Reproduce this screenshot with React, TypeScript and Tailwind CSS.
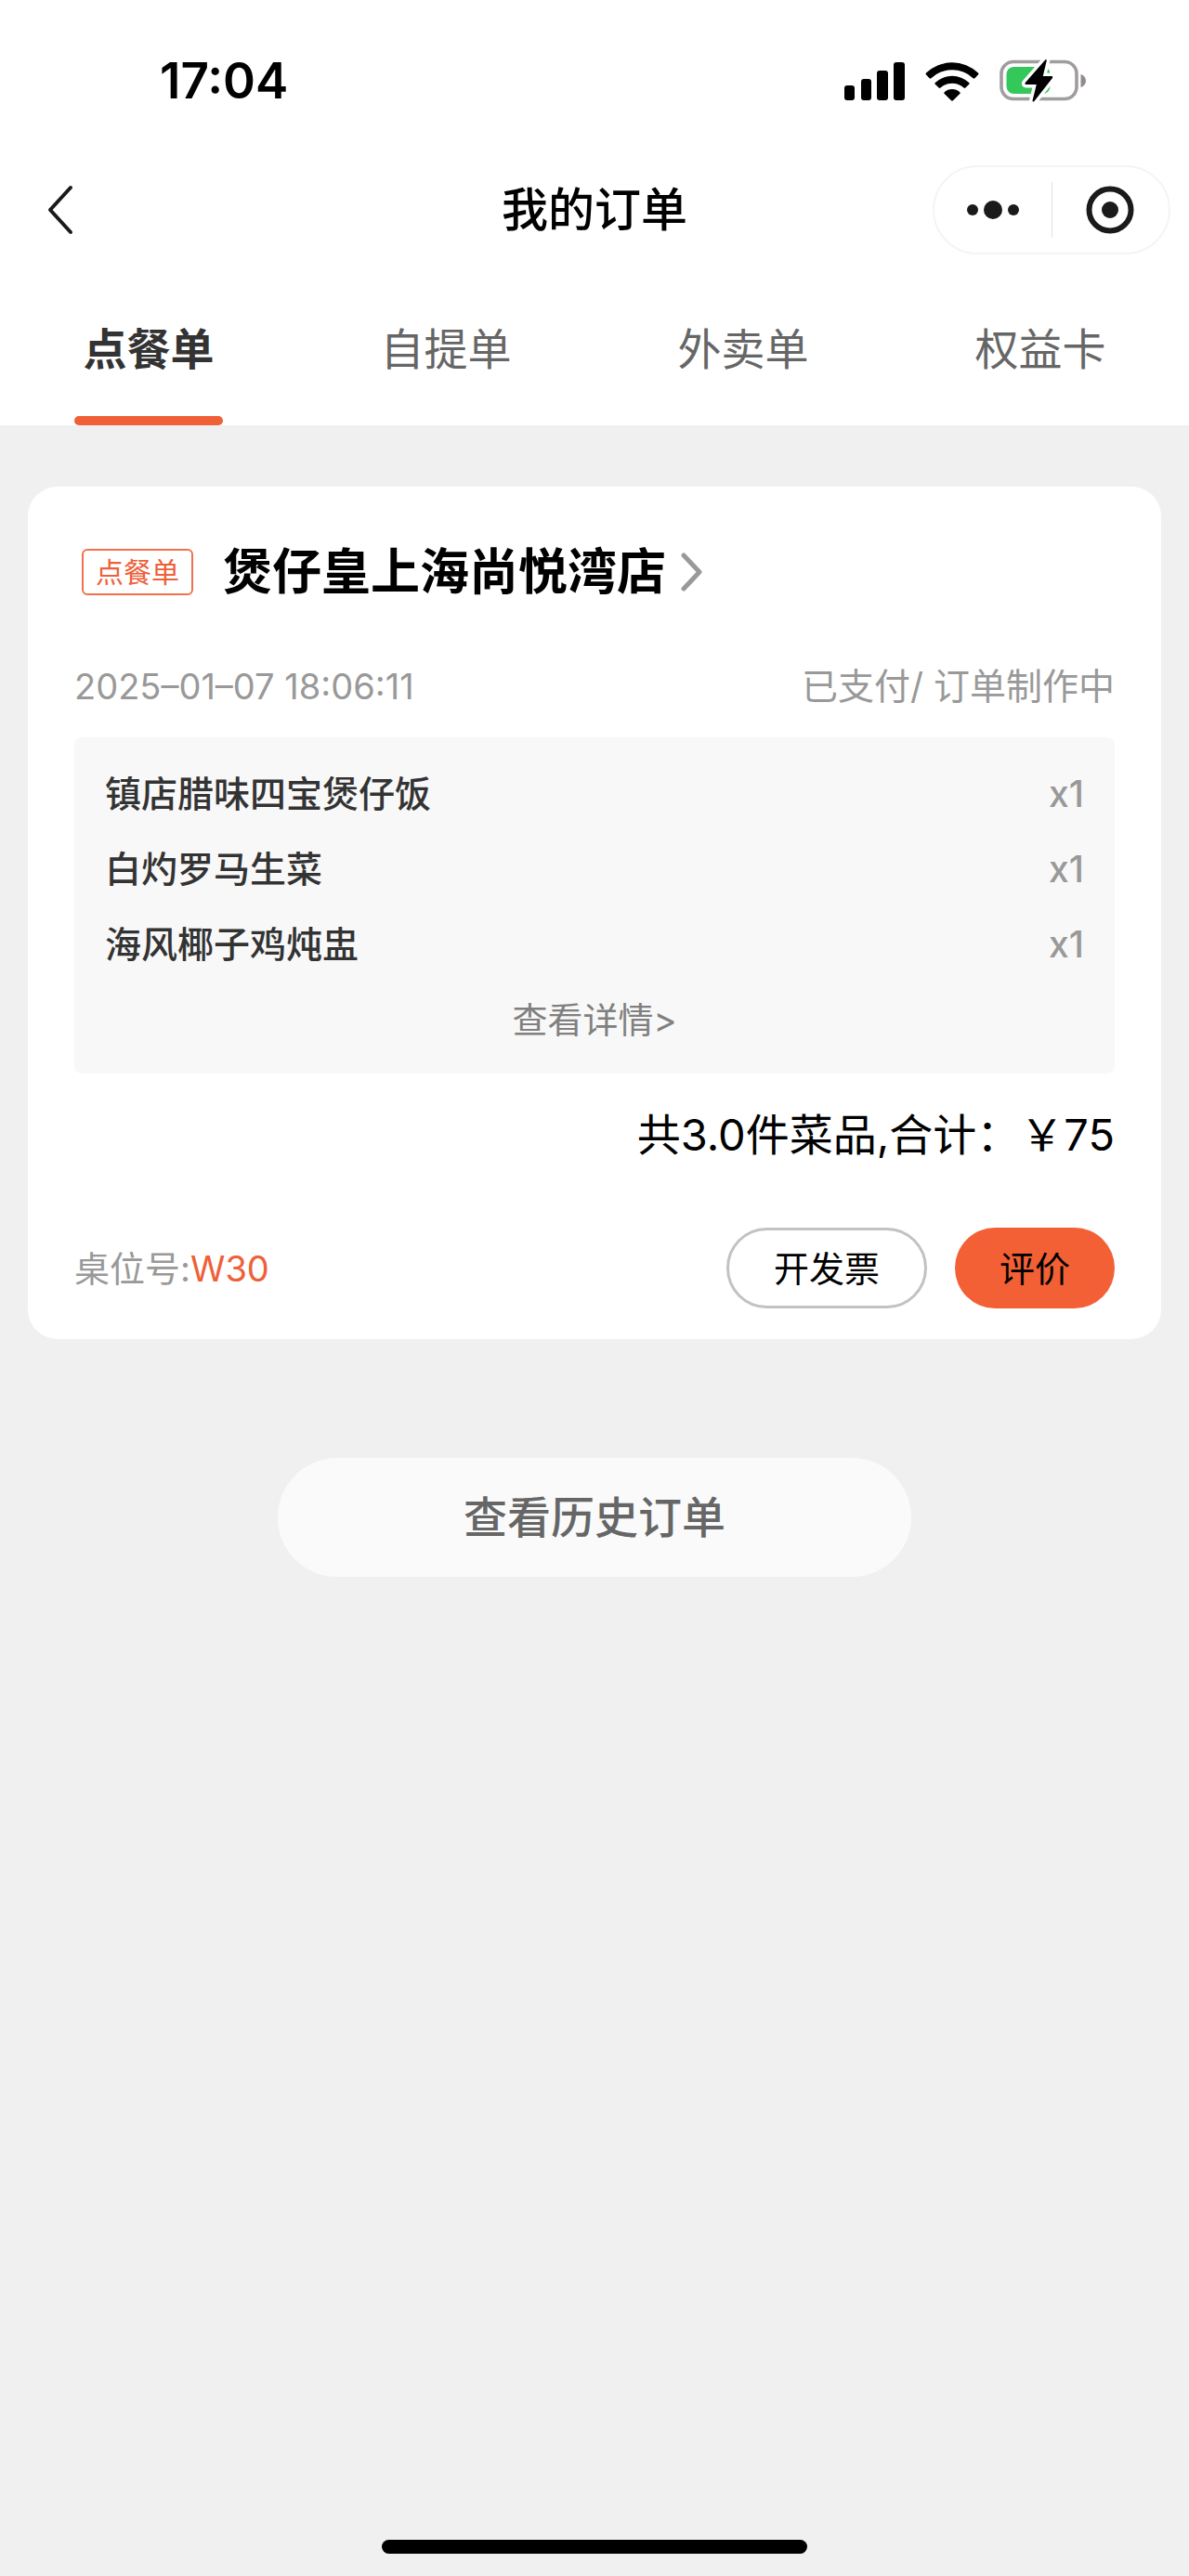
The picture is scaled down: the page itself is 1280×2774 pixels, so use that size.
import { useState } from 'react';
import clsx from 'clsx';

const tabs = ['点餐单', '自提单', '外卖单', '权益卡'];

const order = {
  type: '点餐单',
  store: '煲仔皇上海尚悦湾店',
  time: '2025–01–07 18:06:11',
  status: '已支付/ 订单制作中',
  items: [
    { name: '镇店腊味四宝煲仔饭', count: 1 },
    { name: '白灼罗马生菜', count: 1 },
    { name: '海风椰子鸡炖盅', count: 1 },
  ],
  quantity: 3,
  total: 75,
  table: 'W30',
};

const SignalIcon = () => (
  <svg width="66" height="44" viewBox="0 0 66 44" aria-hidden="true">
    <rect x="1" y="27" width="11" height="16" rx="3" />
    <rect x="19" y="20" width="11" height="23" rx="3" />
    <rect x="36" y="11" width="12" height="32" rx="3" />
    <rect x="54" y="2" width="12" height="41" rx="3" />
  </svg>
);

const WifiIcon = () => (
  <svg width="58" height="44" viewBox="0 0 58 44" aria-hidden="true">
    <path d="M1 13.600a40.500 40.500 0 0 1 56 0c.6.6.6 1.200 0 1.800l-3.600 3.800c-.6.6-1.200.6-1.800 0a33 33 0 0 0-45.200 0c-.6.6-1.200.6-1.800 0L1 15.400c-.6-.6-.6-1.200 0-1.800Z" />
    <path d="M10.800 24a26.500 26.500 0 0 1 36.400 0c.6.6.6 1.200 0 1.800l-3.800 3.800c-.6.6-1.200.6-1.800 0a18.500 18.500 0 0 0-25.200 0c-.6.6-1.200.6-1.800 0l-3.800-3.800c-.6-.6-.6-1.200 0-1.800Z" />
    <path d="M20.700 34.200a12.500 12.500 0 0 1 16.600 0c.6.6.6 1.200 0 1.800l-7.400 7.300c-.6.6-1.200.6-1.800 0L20.700 36c-.6-.6-.6-1.200 0-1.800Z" />
  </svg>
);

const BatteryIcon = () => (
  <svg width="94" height="46" viewBox="0 0 94 46" aria-hidden="true">
    <rect x="2" y="2.500" width="81" height="40" rx="13" fill="none" stroke="#a09c9f" strokeWidth="3.600" />
    <path d="M87.500 16c3.500 1 5.500 3.800 5.500 7s-2 6-5.500 7Z" fill="#8f8c8f" />
    <rect x="7.500" y="8" width="47" height="29" rx="8" fill="#34c759" />
    <path
      d="M49 .8c.5-1.300 2-.8 1.700.6L46.800 18h9.200c1.300 0 1.600 1.200.8 2.200L37.600 44.800c-1 1.200-2.400.6-2-.8L39.800 27h-11c-1.400 0-1.800-1.200-.8-2.200Z"
      stroke="#fff"
      strokeWidth="7"
      strokeLinejoin="round"
      paintOrder="stroke"
    />
  </svg>
);

const StatusBar = () => (
  <div className="flex h-[174px] items-center justify-between pr-[110px] pl-[172px]">
    <span className="text-[53px] leading-[60px] font-semibold">17:04</span>
    <div className="flex items-center gap-[22px]">
      <SignalIcon />
      <WifiIcon />
      <BatteryIcon />
    </div>
  </div>
);

const NavBar = () => (
  <header className="grid h-[104px] grid-cols-[1fr_auto_1fr] items-center px-5">
    <button type="button" aria-label="返回" className="justify-self-start px-7">
      <svg width="32" height="54" viewBox="0 0 32 54" fill="none" stroke="#1a1a1a" strokeWidth="4">
        <path d="M28 3 6 27l22 24" strokeLinejoin="round" strokeLinecap="round" />
      </svg>
    </button>
    <h1 className="text-[50px] leading-[60px] font-medium">我的订单</h1>
    <div className="flex h-24 w-64 items-center justify-self-end rounded-full border-2 border-[#f4f4f4]">
      <button type="button" aria-label="更多" className="flex h-full flex-1 items-center justify-center">
        <svg width="56" height="20" viewBox="0 0 56 20" fill="#1a1a1a">
          <circle cx="6" cy="10" r="6" />
          <circle cx="28" cy="10" r="10" />
          <circle cx="50" cy="10" r="6" />
        </svg>
      </button>
      <span className="h-[60px] w-px bg-[#e2e2e2]" />
      <button type="button" aria-label="关闭" className="flex h-full flex-1 items-center justify-center">
        <svg width="52" height="52" viewBox="0 0 52 52">
          <circle cx="26" cy="26" r="22.500" fill="none" stroke="#1a1a1a" strokeWidth="6" />
          <circle cx="26" cy="26" r="9" fill="#1a1a1a" />
        </svg>
      </button>
    </div>
  </header>
);

const OrderCard = () => (
  <article className="rounded-[32px] bg-white px-[50px] pt-[60px] pb-[33px]">
    <div className="flex h-16 items-center">
      <span className="mr-8 ml-2 flex h-[50px] w-[120px] items-center justify-center rounded-md border-2 border-[#f0714d] text-[30px] leading-[40px] text-[#ee6038]">
        {order.type}
      </span>
      <a href="#store" className="flex items-center gap-4">
        <h2 className="text-[53px] leading-[64px] font-bold">{order.store}</h2>
        <svg width="24" height="42" viewBox="0 0 24 42" fill="none" stroke="#999" strokeWidth="5" aria-hidden="true">
          <path d="m3 3 17 18L3 39" strokeLinecap="round" strokeLinejoin="round" />
        </svg>
      </a>
    </div>

    <div className="mt-[66px] flex items-center justify-between leading-[50px] text-[#999]">
      <time dateTime="2025-01-07T18:06:11" className="text-[38px]">{order.time}</time>
      <span className="text-[39px]">{order.status}</span>
    </div>

    <div className="mt-[30px] rounded-lg bg-[#f8f8f8] px-[33px] pt-5 pb-[18px] leading-[50px]">
      <ul>
        {order.items.map((item) => (
          <li key={item.name} className="flex h-[81px] items-center justify-between text-[39px] font-medium">
            <span className="text-[#333]">{item.name}</span>
            <span className="text-[#999]">x{item.count}</span>
          </li>
        ))}
      </ul>
      <a href="#detail" className="flex h-[81px] items-center justify-center text-[38px] text-[#808080]">
        查看详情&gt;
      </a>
    </div>

    <p className="mt-9 text-right text-[47px] leading-[60px]">
      共{order.quantity.toFixed(1)}件菜品,合计：￥{order.total}
    </p>

    <div className="mt-[70px] flex items-center text-[38px] leading-[50px]">
      <p className="mr-auto text-[#999]">
        桌位号:<span className="text-[#ee6038]">{order.table}</span>
      </p>
      <button type="button" className="h-[87px] rounded-full border-3 border-[#c2c2c2] px-12">
        开发票
      </button>
      <button type="button" className="ml-[30px] h-[87px] rounded-full bg-[#f36035] px-12">
        评价
      </button>
    </div>
  </article>
);

const App = () => {
  const [active, setActive] = useState(0);

  return (
    <div className="flex min-h-screen flex-col bg-[#f0f0f0] font-['Inter','Noto_Sans_CJK_SC',sans-serif] text-black">
      <div className="bg-white">
        <StatusBar />
        <NavBar />
        <nav className="grid h-[180px] grid-cols-4">
          {tabs.map((tab, index) => (
            <button
              key={tab}
              type="button"
              onClick={() => setActive(index)}
              className={clsx(
                'flex flex-col items-center justify-end text-[47px] leading-[60px]',
                active === index ? 'font-bold text-[#333]' : 'text-[#666]'
              )}
            >
              {tab}
              <span className={clsx('mt-[42px] h-[10px] w-1/2 rounded-full', active === index && 'bg-[#f06038]')} />
            </button>
          ))}
        </nav>
      </div>

      <main className="flex flex-1 flex-col px-[30px] pt-[66px]">
        <OrderCard />
        <button
          type="button"
          className="mx-auto mt-32 h-32 rounded-full bg-[#fafafa] px-[200px] text-[47px] leading-[60px] font-medium text-[#666]"
        >
          查看历史订单
        </button>
      </main>

      <div className="mx-auto mb-6 h-[15px] w-[458px] rounded-full bg-black" />
    </div>
  );
};

export default App;
